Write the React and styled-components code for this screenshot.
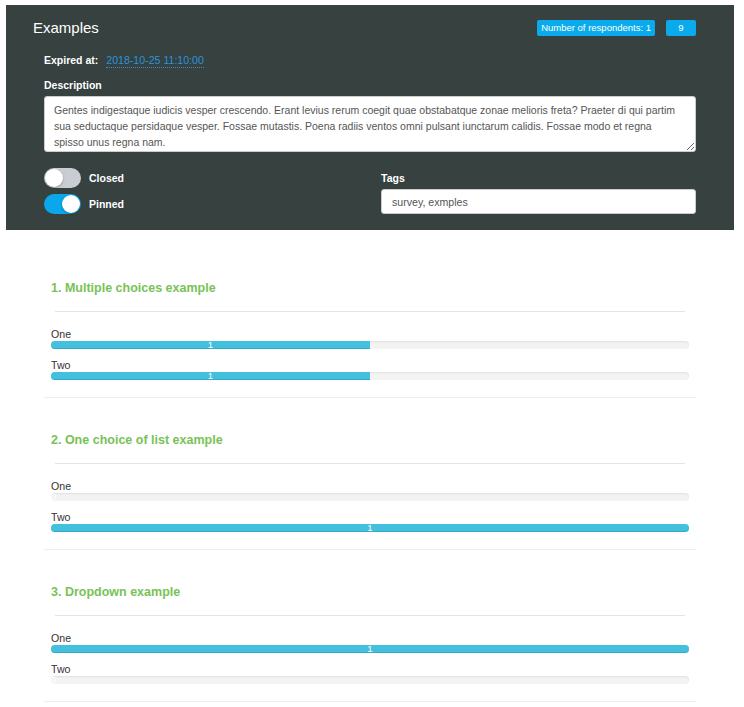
import React from 'react'
import styled, { createGlobalStyle } from 'styled-components'

const GlobalStyle = createGlobalStyle`
  body {
    margin: 0;
    background: #fff;
    font-family: "Liberation Sans", Arial, sans-serif;
    color: #333;
  }
`;

const Header = styled.div`
  margin: 5px 10px 0 6px;
  background: #364140;
  padding: 15px 38px 16px 27px;
`;

const TitleRow = styled.div`
  display: flex;
  align-items: center;
  justify-content: space-between;
  height: 16px;
`;

const Title = styled.h2`
  margin: 0;
  font-size: 15px;
  font-weight: normal;
  color: #fff;
  line-height: 16px;
`;

const Badges = styled.div`
  display: flex;
  gap: 11px;
`;

const Badge = styled.span`
  background: #0aabec;
  color: #fff;
  font-size: 9.5px;
  line-height: 16px;
  height: 16px;
  border-radius: 2px;
  padding: 0 4px;
  min-width: ${p => p.$wide ? '22px' : 'auto'};
  text-align: center;
`;

const Body = styled.div`
  padding-left: 11px;
`;

const ExpiredRow = styled.div`
  display: flex;
  align-items: center;
  margin-top: 16px;
  height: 16px;
  font-size: 10.5px;
`;

const Label = styled.span`
  font-weight: bold;
  color: #fff;
  font-size: 10.5px;
`;

const DateLink = styled.span`
  margin-left: 8px;
  color: #2c94d6;
  font-size: 10.6px;
  border-bottom: 1px dotted #2c94d6;
  line-height: 14px;
`;

const FieldLabel = styled.div`
  font-weight: bold;
  color: #fff;
  font-size: 10.5px;
  line-height: 12px;
  margin-top: ${p => p.$top || 0}px;
`;

const TextArea = styled.textarea`
  display: block;
  box-sizing: border-box;
  width: 100%;
  height: 56px;
  margin-top: 5px;
  padding: 5px 14px 4px 9px;
  border: 1px solid #ccc;
  border-radius: 3px;
  font-family: "Liberation Sans", Arial, sans-serif;
  font-size: 10.5px;
  line-height: 16px;
  color: #555;
  resize: vertical;
  overflow: hidden;
`;

const Bottom = styled.div`
  display: grid;
  grid-template-columns: 337px 1fr;
  margin-top: 16px;
`;

const Toggles = styled.div`
  display: flex;
  flex-direction: column;
  gap: 6px;
`;

const ToggleRow = styled.div`
  display: flex;
  align-items: center;
  gap: 8px;
`;

const Track = styled.span`
  position: relative;
  width: 37px;
  height: 20px;
  border-radius: 10px;
  background: ${p => p.$on ? '#0aa7ea' : '#c9ccd3'};
`;

const Knob = styled.span`
  position: absolute;
  top: 1px;
  left: ${p => p.$on ? '18px' : '1px'};
  width: 18px;
  height: 18px;
  border-radius: 50%;
  background: #fff;
  box-shadow: 0 1px 2px rgba(0, 0, 0, 0.3);
`;

const TagsCol = styled.div`
  padding-top: 4px;
`;

const Input = styled.input`
  display: block;
  box-sizing: border-box;
  width: 100%;
  height: 25px;
  margin-top: 5px;
  padding: 0 10px;
  border: 1px solid #ccc;
  border-radius: 3px;
  font-family: "Liberation Sans", Arial, sans-serif;
  font-size: 10.6px;
  color: #555;
`;

const List = styled.div`
  margin: 16px 48px 0 44px;
`;

const Section = styled.div`
  padding: 32px 7px 17px;
  border-bottom: 1px solid #eee;
`;

const QTitle = styled.h3`
  margin: 0;
  font-size: 12.5px;
  line-height: 20px;
  color: #79c257;
  font-weight: bold;
`;

const Rule = styled.hr`
  margin: 13px 4px 15px;
  border: none;
  border-top: 1px solid #e4e4e4;
  height: 0;
`;

const Option = styled.div`
  & + & {
    margin-top: 9px;
  }
`;

const OptLabel = styled.div`
  font-size: 10.6px;
  line-height: 14px;
  color: #333;
`;

const Bar = styled.div`
  height: 8px;
  border-radius: 4px;
  background: #f3f3f3;
  box-shadow: inset 0 1px 2px rgba(0, 0, 0, 0.08);
`;

const Fill = styled.div`
  height: 100%;
  border-radius: ${p => p.$full ? '4px' : '4px 0 0 4px'};
  background: ${p => p.$empty ? 'transparent' : '#43c0dd'};
  box-shadow: ${p => p.$empty ? 'none' : 'inset 0 -1px 0 rgba(0, 0, 0, 0.12)'};
  color: #fff;
  font-size: 9.5px;
  line-height: 8px;
  text-align: ${p => p.$empty ? 'left' : 'center'};
  white-space: nowrap;
`;

const questions = [
  { title: '1. Multiple choices example', options: [['One', 1, 50], ['Two', 1, 50]] },
  { title: '2. One choice of list example', options: [['One', 0, 0], ['Two', 1, 100]] },
  { title: '3. Dropdown example', options: [['One', 1, 100], ['Two', 0, 0]] },
];

const description =
  'Gentes indigestaque iudicis vesper crescendo. Erant levius rerum coegit quae obstabatque zonae melioris freta? Praeter di qui partim sua seductaque persidaque vesper. Fossae mutastis. Poena radiis ventos omni pulsant iunctarum calidis. Fossae modo et regna spisso unus regna nam.';

export default function App() {
  return (
    <>
      <GlobalStyle />
      <Header>
        <TitleRow>
          <Title>Examples</Title>
          <Badges>
            <Badge>Number of respondents: 1</Badge>
            <Badge $wide>9</Badge>
          </Badges>
        </TitleRow>
        <Body>
          <ExpiredRow>
            <Label>Expired at:</Label>
            <DateLink>2018-10-25 11:10:00</DateLink>
          </ExpiredRow>
          <FieldLabel $top={11}>Description</FieldLabel>
          <TextArea defaultValue={description} />
          <Bottom>
            <Toggles>
              <ToggleRow>
                <Track><Knob /></Track>
                <Label>Closed</Label>
              </ToggleRow>
              <ToggleRow>
                <Track $on><Knob $on /></Track>
                <Label>Pinned</Label>
              </ToggleRow>
            </Toggles>
            <TagsCol>
              <FieldLabel>Tags</FieldLabel>
              <Input defaultValue="survey, exmples" />
            </TagsCol>
          </Bottom>
        </Body>
      </Header>
      <List>
        {questions.map(q => (
          <Section key={q.title}>
            <QTitle>{q.title}</QTitle>
            <Rule />
            {q.options.map(([name, count, pct]) => (
              <Option key={name}>
                <OptLabel>{name}</OptLabel>
                <Bar>
                  <Fill
                    $empty={pct === 0}
                    $full={pct === 100}
                    style={{ width: (pct === 0 ? 100 : pct) + '%' }}
                  >
                    {count}
                  </Fill>
                </Bar>
              </Option>
            ))}
          </Section>
        ))}
      </List>
    </>
  )
}
